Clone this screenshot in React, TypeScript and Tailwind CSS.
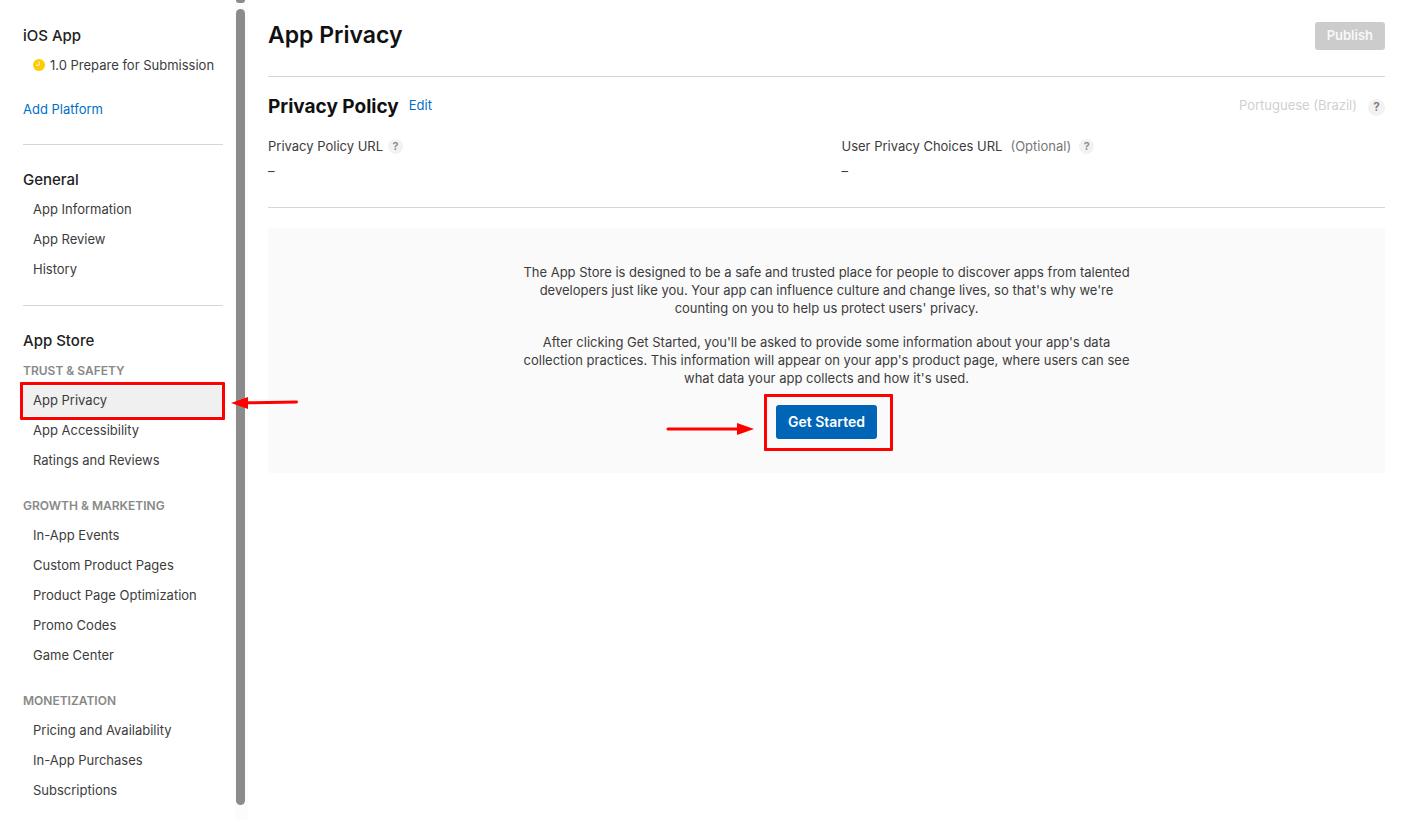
import type React from "react"

interface NavGroup {
  title?: string
  items: string[]
}

const generalItems = ["App Information", "App Review", "History"]

const storeGroups: NavGroup[] = [
  { title: "TRUST & SAFETY", items: ["App Privacy", "App Accessibility", "Ratings and Reviews"] },
  {
    title: "GROWTH & MARKETING",
    items: ["In-App Events", "Custom Product Pages", "Product Page Optimization", "Promo Codes", "Game Center"],
  },
  { title: "MONETIZATION", items: ["Pricing and Availability", "In-App Purchases", "Subscriptions"] },
]

const NavHeading: React.FC<{ children: React.ReactNode }> = ({ children }) => (
  <h2 className="text-[15px] leading-[30px] font-medium text-[#222]">{children}</h2>
)

const NavItem: React.FC<{ label: string; active?: boolean }> = ({ label, active }) => (
  <li className="relative">
    <a
      href="#"
      aria-current={active ? "page" : undefined}
      className={`block rounded px-[10px] pb-[2px] leading-7 ${active ? "bg-[#f0f0f0]" : ""}`}
    >
      {label}
    </a>
    {active && (
      <>
        <span className="pointer-events-none absolute -inset-y-1 -right-[2px] -left-[3px] rounded-[1px] border-3 border-[#ff0000]" />
        <svg
          className="pointer-events-none absolute left-full top-[10px] z-20 ml-2"
          width="68"
          height="14"
          viewBox="0 0 68 14"
          aria-hidden="true"
        >
          <path d="M14 6.8 65.5 6" stroke="#ff0000" strokeWidth="3" strokeLinecap="round" />
          <path d="M0 7 17 1v12z" fill="#ff0000" />
        </svg>
      </>
    )}
  </li>
)

const HelpButton: React.FC<{ topic: string; large?: boolean }> = ({ topic, large }) => (
  <button
    type="button"
    aria-label={`Help: ${topic}`}
    className={`flex items-center justify-center rounded-full bg-[#f2f2f2] font-semibold ${
      large ? "size-[17px] text-xs text-[#777]" : "size-[15px] text-[11px] text-[#888]"
    }`}
  >
    ?
  </button>
)

const Sidebar: React.FC = () => (
  <aside className="relative flex h-full w-[248px] shrink-0">
    <nav className="w-[235px] pt-[21px] pr-3 pl-[23px]">
      <NavHeading>iOS App</NavHeading>
      <a href="#" className="flex items-center gap-[5px] pb-[2px] pl-[10px] leading-7 whitespace-nowrap">
        <svg width="12" height="12" viewBox="0 0 12 12" aria-hidden="true">
          <circle cx="6" cy="6" r="6" fill="#ffcc00" />
          <path d="M6.2 2.5v3.7H3" fill="none" stroke="#fff" strokeWidth="1" />
        </svg>
        1.0 Prepare for Submission
      </a>
      <a href="#" className="mt-[14px] block pb-[2px] leading-7 text-[#0070c9]">
        Add Platform
      </a>
      <hr className="mt-[19px] mb-5 border-[#d6d6d6]" />

      <NavHeading>General</NavHeading>
      <ul>
        {generalItems.map((item) => (
          <NavItem key={item} label={item} />
        ))}
      </ul>
      <hr className="my-5 border-[#d6d6d6]" />

      <NavHeading>App Store</NavHeading>
      <div className="space-y-[15px]">
        {storeGroups.map((group) => (
          <section key={group.title}>
            <h3 className="text-xs leading-[30px] font-semibold text-[#888]">{group.title}</h3>
            <ul>
              {group.items.map((item) => (
                <NavItem key={item} label={item} active={item === "App Privacy"} />
              ))}
            </ul>
          </section>
        ))}
      </div>
    </nav>
    {/* scrollbar */}
    <div className="flex w-[13px] flex-col items-center bg-[#fcfcfc] pr-[2px] pb-[15px]">
      <div className="h-[3px] w-[9px] rounded-b-sm bg-[#8b8b8b]" />
      <div className="mt-[6px] w-[9px] flex-1 rounded-full bg-[#8b8b8b]" />
    </div>
  </aside>
)

const App: React.FC = () => {
  return (
    <div className="flex h-screen overflow-hidden bg-white font-['Inter',sans-serif] text-[13px] text-[#3c3c3c]">
      <Sidebar />
      <main className="min-w-0 flex-1 pr-[26px] pl-5">
        <header className="flex h-[77px] items-start justify-between border-b border-[#d6d6d6]">
          <h1 className="pt-5 text-[23px] leading-[30px] font-semibold text-[#111]">App Privacy</h1>
          <button
            type="button"
            disabled
            className="mt-[22px] h-7 rounded-[3px] bg-[#ccc] px-3 text-[13px] font-semibold text-[#f8f8f8]"
          >
            Publish
          </button>
        </header>

        <section className="border-b border-[#d6d6d6] pt-[15px] pb-[27px]">
          <div className="flex items-center justify-between">
            <div className="flex items-center gap-[10px]">
              <h2 className="text-[19px] leading-[30px] font-bold text-[#111]">Privacy Policy</h2>
              <a href="#" className="pb-[2px] text-[#0070c9]">
                Edit
              </a>
            </div>
            <div className="flex items-center gap-[11px] text-[#d0d0d0]">
              <span className="pb-[2px]">Portuguese (Brazil)</span>
              <HelpButton topic="language" large />
            </div>
          </div>
          <dl className="mt-[15px] grid grid-cols-2 gap-x-[30px] leading-[18px]">
            <div>
              <dt className="flex items-center gap-[5px]">
                Privacy Policy URL
                <HelpButton topic="Privacy Policy URL" />
              </dt>
              <dd className="mt-[7px]">–</dd>
            </div>
            <div>
              <dt className="flex items-center gap-2">
                User Privacy Choices URL
                <span className="text-[#777]">(Optional)</span>
                <HelpButton topic="User Privacy Choices URL" />
              </dt>
              <dd className="mt-[7px]">–</dd>
            </div>
          </dl>
        </section>

        <section className="mt-5 flex flex-col items-center bg-[#fafafa] px-5 pt-[35px] pb-[34px] text-center leading-[18px]">
          <div className="max-w-[610px] space-y-4">
            <p>
              The App Store is designed to be a safe and trusted place for people to discover apps from talented
              developers just like you. Your app can influence culture and change lives, so that's why we're counting on
              you to help us protect users' privacy.
            </p>
            <p>
              After clicking Get Started, you'll be asked to provide some information about your app's data collection
              practices. This information will appear on your app's product page, where users can see what data your app
              collects and how it's used.
            </p>
          </div>
          <div className="relative mt-[18px]">
            <button type="button" className="h-[34px] rounded-[3px] bg-[#0064b7] px-3 text-sm font-semibold text-white">
              Get Started
            </button>
            <span className="pointer-events-none absolute -top-[11px] -right-4 -bottom-3 -left-3 rounded-[1px] border-3 border-[#ff0000]" />
            <svg
              className="pointer-events-none absolute top-[17px] right-full mr-[22px]"
              width="88"
              height="14"
              viewBox="0 0 88 14"
              aria-hidden="true"
            >
              <path d="M2 7h70" stroke="#ff0000" strokeWidth="3" strokeLinecap="round" />
              <path d="M88 7 71 1v12z" fill="#ff0000" />
            </svg>
          </div>
        </section>
      </main>
    </div>
  )
}

export default App
